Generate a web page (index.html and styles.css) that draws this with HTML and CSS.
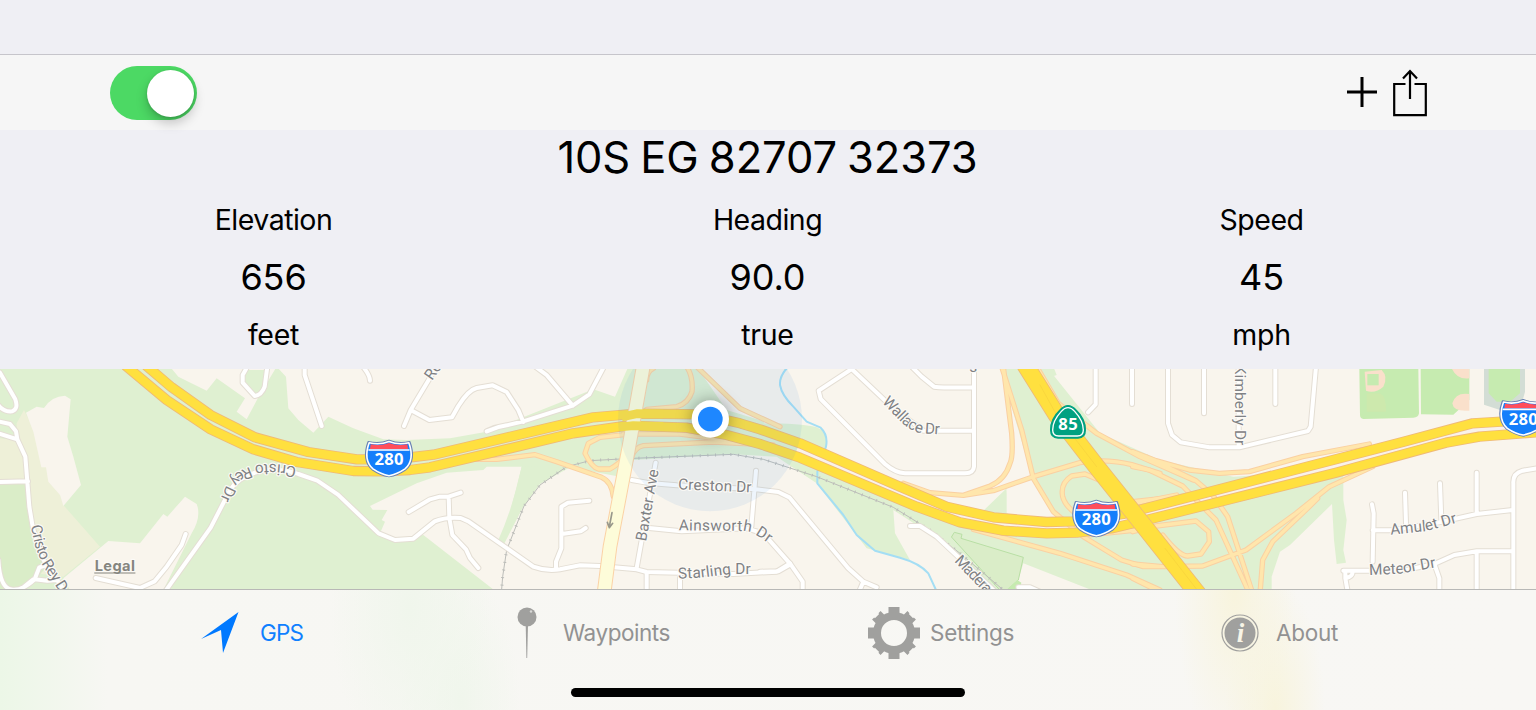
FILE: index.html
```html
<!DOCTYPE html>
<html lang="en">
<head>
<meta charset="utf-8">
<title>GPS</title>
<link rel="stylesheet" href="styles.css">
</head>
<body>
<div class="app">
  <div class="status"></div>
  <header class="toolbar">
    <div class="switch"><span class="knob"></span></div>
    <div class="actions">
      <svg class="plus" width="30" height="30" viewBox="0 0 30 30"><path d="M15 0V30M0 15H30"/></svg>
      <svg class="share" width="34" height="48" viewBox="0 0 34 48"><path d="M12.5 15H1.2V46.2H32.8V15H21.5"/><path d="M17 30V3M10 9.500L17 2L24 9.500"/></svg>
    </div>
  </header>
  <section class="readout">
    <h1 class="coords"><span>10S EG 82707 32373</span></h1>
    <div class="stats">
      <div class="stat"><span class="name elev">Elevation</span><span class="value">656</span><span class="unit">feet</span></div>
      <div class="stat"><span class="name">Heading</span><span class="value">90.0</span><span class="unit">true</span></div>
      <div class="stat"><span class="name">Speed</span><span class="value">45</span><span class="unit">mph</span></div>
    </div>
  </section>
  <svg class="map" viewBox="0 27 4608 663" preserveAspectRatio="none">
    <defs>
      <g id="streets">
        <path d="M0 38L46 118Q56 148 36 154Q10 156 -5 135M-5 184L30 192L48 214L52 238L76 290L88 440L98 500L120 580L142 620L200 700M-5 220L52 238M-5 366L84 364M-5 600Q0 690 40 689Q70 690 104 658L142 662L170 660M104 658L118 622L140 615M100 658L60 690"/>
        <path d="M287 654L420 684L464 664L500 620L545 555L557 522M495 695L632 503L690 390Q720 345 790 332Q850 325 895 342L952 362L1014 404L1136 520L1185 540L1240 536L1304 484Q1340 470 1382 474L1405 484L1600 620Q1640 635 1680 628L1740 616L1800 618L1910 628L1940 636L2200 642L2330 635L2370 610M742 20L728 45V68L764 108Q785 105 794 80L802 20M914 20V45L965 198M1085 15Q1110 45 1110 62"/>
        <g transform="translate(1140)">
          <path d="M72 198L92 150L170 20M92 150L148 180L216 172L235 138Q265 90 290 84L338 76L380 96L415 150L430 186M320 214Q350 200 380 196L430 184L578 137L628 103L672 20M466 20L500 45L578 137M86 456L150 418L180 410L206 410L242 398M206 410L208 474L217 525L258 568L270 594L295 624M528 625V605L544 565V440L564 428L628 422M546 522L602 514L617 504M755 360L800 368L890 376L1128 388L1195 396L1228 412L1405 625L1450 665L1490 682M1128 332L1114 500M827 308L770 624M800 503L905 514L1100 505L1150 520L1232 613L1268 665V700M800 640V700M900 640V700M1140 635L1195 634L1232 613M1450 665L1435 700"/>
        </g>
        <g transform="translate(2280)">
          <path d="M455 20L485 50L522 80Q560 84 642 82M642 20V320Q640 340 615 340H435Q405 338 375 312L182 117L176 92L275 27L400 145L490 212H642M450 498H480L530 530L610 605L700 690M1007 20V133L984 157M1116 20V132M775 682H810L850 700"/>
        </g>
        <g transform="translate(3408)">
          <path d="M96 20V190L108 225L134 247L220 262H310L516 213L524 200L540 20M204 20V160M418 20V132M308 20V262M708 433L713 460L710 605M710 511H770L920 485L1022 462L1130 450M807 398L810 490M912 370L916 480M1022 338V462M1202 325L1160 332Q1130 340 1132 370V700M622 632H800L895 612L955 585L1022 574H1130M1022 574V700M636 700L628 655Q650 650 650 636M628 632V655M895 612L910 655V700"/>
        </g>
      </g>
      <g id="ramps">
        <g transform="translate(1140)">
          <path d="M260 298L350 298L465 284L530 305L665 352Q695 365 700 410M740 223L660 232L625 250L615 280Q635 322 655 327H690Q720 310 735 290M740 350L755 290Q765 262 790 257L1000 246L1180 255M730 222L900 222L1040 240M800 148L890 140Q925 130 936 95Q940 50 920 20M800 60Q800 35 820 25M950 20L1080 145L1200 200"/>
        </g>
        <g transform="translate(2280)">
          <path d="M730 20L755 220Q760 290 750 310Q735 360 690 378L610 406L510 398L430 370M725 20L785 210L820 355L880 455L970 530L1085 600L1150 620H1200M610 406L700 392L820 350L960 308Q1040 295 1115 314L1200 340M960 470Q915 440 908 410Q900 370 935 348L975 342L1030 365L1080 425M830 20L895 130L1010 220L1140 290L1300 360M640 508L900 580L1100 645L1200 690M980 525L1130 510M1100 435L1250 405"/>
        </g>
        <g transform="translate(3408)">
          <path d="M-10 275L60 302L160 330L250 340L340 335L500 290L700 252M-10 320L40 330L140 378L185 425L240 480L340 700M30 290L180 362L230 405L275 470L350 700M-10 425L150 408M-10 515L60 498L180 483L218 515L220 545L195 582L155 588Q130 588 80 525M-10 612L80 620L200 618L330 570L480 460L580 380L710 320M545 415L520 440L410 545L380 600L372 700M-10 655L70 695"/>
        </g>
      </g>
      <g id="highway">
        <path d="M440 18L515 82L632 165L765 232L925 276L1070 298H1140L1240 291L1300 284L1780 172L1910 161L2100 163L2220 190L2280 208L2400 250L2700 380L2840 440L2980 472L3140 486L3220 484L3370 462L3638 393L4208 246L4418 190L4620 178"/>
        <path d="M378 18L500 120L632 208L760 268L890 306L1060 333L1150 334L1230 330L1290 322L1720 220L1880 197L2060 203L2180 225L2280 252L2400 293L2750 440L2880 487L3010 512L3140 520L3230 518L3340 504L3448 478L4008 338L4338 248L4438 230L4620 216"/>
      </g>
      <path id="avenue" d="M1930 18L1885 270L1830 560L1812 700"/>
      <path id="freeway" d="M3078 18L3170 165L3290 320L3408 468L3596 705"/>
      <path id="shield" d="M-62 -54Q-30 -46 0 -58Q30 -46 62 -54C76 -15 70 10 50 28Q25 45 0 49Q-25 45 -50 28C-70 10 -76 -15 -62 -54Z"/>
      <path id="p-cristo" d="M92 498L106 560L130 620L200 730"/>
      <path id="p-rey" d="M890 322Q840 309 790 313Q730 319 700 347Q680 367 652 440"/>
      <path id="p-wallace" d="M2645 127L2705 188Q2735 216 2768 220L2850 225"/>
      <path id="p-ains" d="M2036 511L2235 513Q2262 513 2330 570"/>
      <path id="p-star" d="M2035 656L2110 652L2200 641L2275 641"/>
      <path id="p-amulet" d="M4172 524L4280 513L4390 483"/>
      <path id="p-meteor" d="M4108 645L4200 641L4330 618"/>
    </defs>
    <rect class="land" y="20" width="4608" height="680"/>
    <path class="green" d="M0 20H510L535 50L620 92L650 55L735 115L710 155L740 178L775 112L830 20L858 50L865 145L895 180L940 218L985 170L1060 205L1150 238L1220 240L1350 235L1460 215L1780 88L1845 110L1885 20H2360L2315 130L2292 190Q2400 190 2450 202Q2485 215 2478 260L2470 310L2550 345L2900 500L3020 385V460L3160 490L3180 470L3100 365L3000 20H3140L3300 220L3480 300L3700 350L4030 330V420L4040 480L4030 570L4038 608L4010 612L4002 540L3996 432L3870 555L3840 575L3815 650V700H3300L3070 610L3045 690L2990 700L2850 560L2680 450L2685 520L2730 600L2600 565L2450 370L2330 290L2200 283L1900 300L1860 350L1700 320L1640 440L1560 560L1508 546L1565 320L1460 320L1450 330L1340 338L1250 370L1110 438L1118 449L1162 450L1145 480L1155 485L1140 520L1185 540L1270 525L1495 700H0Z"/>
    <path class="green" d="M735 30H800L790 95L764 105L730 65ZM3110 20H3160L3170 45L3155 50Z"/>
    <path class="land" d="M2472 312L2860 465L2770 410L2690 372L2480 270ZM3020 387L3090 365L3175 470L3100 490L3025 470ZM2355 20L2320 130L2295 185L2180 150L2090 20Z"/>
    <path class="land" d="M1510 545L1560 440L1572 438L1640 340L1700 325L1830 370V640H1640Z"/>
    <path class="green" d="M1565 320L1710 322L1620 372L1572 436L1512 552L1494 542Q1540 440 1565 320Z"/>
    <path class="olive" d="M72 150L150 310L190 435L300 560L190 650L110 640L80 400L50 240L50 190ZM0 235L50 240L82 360H0Z"/>
    <path class="park" d="M0 372H84L98 500L140 620L80 688H0Z"/>
    <path class="land" d="M78 158L110 140L132 144Q155 108 195 107L212 118L202 230L220 290L243 375L190 438L180 405L145 365L138 322L124 322L100 215ZM190 655L325 543L420 550L490 462L502 470L555 410L590 432Q605 470 575 520L490 690H210Z"/>
    <path class="park outlined" d="M2855 530L2863 517L2886 523L2883 535L3070 592L3055 660L3010 700Z"/>
    <path class="field" d="M3052 660L3064 668L3056 700H3008ZM4078 27H4255L4257 160Q4255 173 4240 173L4090 177Q4080 176 4080 165ZM4262 27H4408V120L4360 164L4263 163Z"/>
    <path class="trackbed" d="M4452 20H4575V95L4560 150H4500L4452 134Z"/>
    <path class="field" d="M4466 20H4560V100L4530 125H4490L4466 100Z"/>
    <g class="dirt"><path d="M4094 35L4145 30Q4165 50 4150 80Q4125 102 4098 92ZM4356 27H4408V55Q4372 60 4356 27ZM4408 102V152Q4360 156 4357 130Q4366 96 4408 102Z"/><path class="field" d="M4102 42H4136V76H4102Z"/><path class="infield" d="M4100 100H4140Q4160 110 4158 155H4100Z"/></g>
    <path class="stream" d="M2366 20Q2338 45 2340 75Q2345 105 2380 140L2420 185L2462 203Q2485 225 2478 260L2452 335V370L2530 465L2570 525L2625 572L2700 593Q2760 610 2785 640L2808 690"/>
    <path class="rail" d="M1504 700L1508 650L1520 570L1572 438L1620 375L1700 320L1770 302L1900 295L2200 283L2290 298L2450 350L2680 442L2790 510L2880 580L3010 690"/>
    <path class="rail ties" d="M1504 700L1508 650L1520 570L1572 438L1620 375L1700 320L1770 302L1900 295L2200 283L2290 298L2450 350L2680 442L2790 510L2880 580L3010 690"/>
    <use href="#streets" class="street-edge"/><use href="#streets" class="street"/>
    <path class="verge" d="M2400 272L2725 410L2860 463L2995 492L3140 503L3225 501L3370 480L3543 436L4108 292L4428 210L4608 197"/>
    <use href="#ramps" class="ramp-edge"/><use href="#ramps" class="ramp"/>
    <use href="#highway" class="hw-edge"/><use href="#highway" class="hw"/>
    <use href="#freeway" class="fw-edge"/><use href="#freeway" class="fw"/>
    <path class="median" d="M3120 75L3170 165L3290 320M3495 565L3590 688"/>
    <use href="#avenue" class="av-edge"/><use href="#avenue" class="av"/>
    <path class="hw" d="M1865 171L1910 161L1990 162M1860 201L1900 197L1990 200"/>
    <path class="arrow" d="M1836 458L1829 495M1822 487L1828 503L1838 490"/>
    <circle class="accuracy" cx="2130" cy="178" r="276"/>
    <g class="labels">
      <text transform="translate(1296 63) rotate(-55)">Re</text>
      <text><textPath href="#p-cristo" textLength="222">Cristo Rey D</textPath></text>
      <text><textPath href="#p-rey" textLength="280">Cristo Rey Dr</textPath></text>
      <text><textPath href="#p-wallace" textLength="208">Wallace Dr</textPath></text>
      <text transform="translate(2034 388) rotate(2.500)" textLength="220">Creston Dr</text>
      <text><textPath href="#p-ains" textLength="278">Ainsworth Dr</textPath></text>
      <text><textPath href="#p-star" textLength="218">Starling Dr</textPath></text>
      <text transform="translate(1938 545) rotate(-80)" textLength="218">Baxter Ave</text>
      <text transform="translate(2862 604) rotate(46)" textLength="138">Madera</text>
      <text transform="translate(3706 14) rotate(90)" textLength="242">Kimberly Dr</text>
      <text transform="translate(2908 36)">s</text>
      <text><textPath href="#p-amulet" textLength="204">Amulet Dr</textPath></text>
      <text><textPath href="#p-meteor" textLength="202">Meteor Dr</textPath></text>
      <text class="legal" x="284" y="634" textLength="121">Legal</text>
    </g>
    <path class="legal-line" d="M284 639H405"/>
    <g class="shields">
      <g transform="translate(1167 300)"><use href="#shield" class="rim"/><use href="#shield" class="blue"/><path class="red" d="M-57 -33L-55 -47Q-25 -41 0 -51Q25 -41 55 -47L57 -33Z"/><path class="rule" d="M-60 -30H60"/><text y="16" textLength="87">280</text></g>
      <g transform="translate(3289 480)"><use href="#shield" class="rim"/><use href="#shield" class="blue"/><path class="red" d="M-57 -33L-55 -47Q-25 -41 0 -51Q25 -41 55 -47L57 -33Z"/><path class="rule" d="M-60 -30H60"/><text y="16" textLength="87">280</text></g>
      <g transform="translate(4570 178)"><use href="#shield" class="rim"/><use href="#shield" class="blue"/><path class="red" d="M-57 -33L-55 -47Q-25 -41 0 -51Q25 -41 55 -47L57 -33Z"/><path class="rule" d="M-60 -30H60"/><text y="16" textLength="87">280</text></g>
      <g transform="translate(3204 188)"><path class="state" d="M0 -51Q12 -51 24 -38Q53 -10 52 22Q52 46 30 46H-30Q-52 46 -52 22Q-53 -10 -24 -38Q-12 -51 0 -51Z"/><path class="state-line" d="M0 -45Q10 -45 20 -34Q46 -6 46 22Q46 40 28 40H-28Q-46 40 -46 22Q-46 -6 -20 -34Q-10 -45 0 -45Z"/><text y="22" textLength="58">85</text></g>
    </g>
    <g class="me"><circle cx="2131" cy="177" r="56"/><circle class="dot" cx="2131" cy="177" r="37"/></g>
  </svg>
  <nav class="tabs">
    <a class="tab gps"><svg width="38" height="42" viewBox="0 0 38 42"><path d="M37.500 0L22 41L20 18L0 27Z"/></svg><span>GPS</span></a>
    <a class="tab waypoints"><svg width="20" height="52" viewBox="0 0 20 52"><circle cx="10" cy="10" r="9.500"/><path d="M8.700 18H11L10.200 51H9.400Z"/><circle class="glint" cx="14" cy="4.500" r="1.200"/></svg><span>Waypoints</span></a>
    <a class="tab settings"><svg width="52" height="52" viewBox="-26 -26 52 52"><path d="M-5.500 -26H5.500V-18H-5.500ZM-5.500 18H5.500V26H-5.500ZM-26 -5.500H-18V5.500H-26ZM18 -5.500H26V5.500H18Z"/><path transform="rotate(45)" d="M-6 -25H-3V-24H3V-25H6V-16H-6ZM-6 25H-3V24H3V25H6V16H-6ZM-25 -6V-3H-24V3H-25V6H-16V-6ZM25 -6V-3H24V3H25V6H16V-6Z"/><circle class="ring" r="17"/></svg><span>Settings</span></a>
    <a class="tab about"><svg width="38" height="38" viewBox="0 0 38 38"><circle class="rim" cx="19" cy="19" r="18"/><circle cx="19" cy="19" r="15.500"/><text x="19.500" y="28" text-anchor="middle">i</text></svg><span>About</span></a>
    <div class="home"></div>
  </nav>
</div>
</body>
</html>
```
FILE: styles.css
```css
* { box-sizing: border-box; }
body { margin: 0; background: #efeff4; }
.app { width: 1536px; height: 710px; overflow: hidden; display: flex; flex-direction: column; font-family: Inter, "Liberation Sans", sans-serif; color: #000; }
.status { height: 54px; flex: none; }
.toolbar { height: 76px; flex: none; border-top: 1px solid #c6c5cb; background: #f6f6f6; display: flex; justify-content: space-between; align-items: flex-start; padding: 11px 109px 0 110px; }
.switch { width: 87px; height: 54px; border-radius: 27px; background: #4cd964; display: flex; justify-content: flex-end; padding: 3.500px 3px; }
.knob { width: 47px; height: 47px; border-radius: 50%; background: #fff; box-shadow: 0 6px 12px rgba(0,0,0,.22), 0 1px 3px rgba(0,0,0,.15); }
.actions { display: flex; gap: 16px; padding-top: 2px; }
.actions svg { fill: none; stroke: #000; }
.plus { margin-top: 9px; stroke-width: 3; }
.share { stroke-width: 2.2; margin-top: .6px; }
.readout { height: 239px; flex: none; text-align: center; }
.coords { margin: 0; height: 55px; font-size: 43.500px; line-height: 55px; font-weight: 400; letter-spacing: -.1px; word-spacing: -2px; padding-right: 1px; }
.stats { display: grid; grid-template-columns: repeat(3, 494px); padding-left: 26.500px; }
.stat { display: flex; flex-direction: column; }
.name { height: 71px; line-height: 70px; font-size: 28.500px; letter-spacing: -.5px; }
.value { height: 43px; line-height: 42px; font-size: 36px; letter-spacing: -.1px; }
.unit { height: 70px; line-height: 72px; font-size: 28.500px; letter-spacing: -.3px; }
.map { width: 1536px; height: 221px; flex: none; display: block; fill: none; stroke-linejoin: round; stroke-linecap: round; }
.land { fill: #f9f5ed; }
.green { fill: #dff0d1; }
.olive { fill: #eef0d8; }
.park { fill: #daedc8; }
.outlined { stroke: #b9dfa5; stroke-width: 3; }
.field { fill: #c6ebb0; }
.trackbed { fill: #d3ddd5; }
.dirt { fill: #fae0cb; }
.infield { fill: #cde9ad; }
.stream { stroke: #a4def4; stroke-width: 6; }
.rail { stroke: #bcbdb9; stroke-width: 3; }
.ties { stroke-width: 9; stroke-dasharray: 3 20; stroke-linecap: butt; }
.street-edge { stroke: #e4ded4; stroke-width: 18; }
.street { stroke: #fff; stroke-width: 12; }
.verge { stroke: #f9f2ea; stroke-width: 20; }
.ramp-edge { stroke: #fad0a2; stroke-width: 16; }
.ramp { stroke: #ffe6ac; stroke-width: 10; }
.hw-edge { stroke: #efb977; stroke-width: 31; }
.hw { stroke: #ffe03f; stroke-width: 26; stroke-linecap: butt; }
.fw-edge { stroke: #efb977; stroke-width: 54; }
.fw { stroke: #ffe03f; stroke-width: 49; }
.median { stroke: #f6d23d; stroke-width: 2; }
.av-edge { stroke: #fbd2a5; stroke-width: 44; }
.av { stroke: #fdfcd9; stroke-width: 38; }
.arrow { stroke: #98988b; stroke-width: 5; }
.accuracy { fill: rgba(65,145,225,.09); }
.labels { font: 400 46px Roboto, sans-serif; fill: #7f8184; stroke: #fcfaf6; stroke-width: 7; paint-order: stroke; }
.legal { font: 700 44px Inter, sans-serif; fill: #85857f; }
.legal-line { stroke: #85857f; stroke-width: 3; }
.shields { font: 700 50px "Noto Sans", sans-serif; text-anchor: middle; fill: #fff; }
.shields .rim { fill: #6a83b4; stroke: #6a83b4; stroke-width: 6; }
.shields .blue { fill: #147efb; stroke: #fff; stroke-width: 5; transform: scale(.96); }
.shields .red { fill: #ff4e5c; }
.shields .rule { stroke: #fff; stroke-width: 5; }
.state { fill: #00a181; stroke: #00a181; stroke-width: 4; }
.state-line { fill: none; stroke: #fff; stroke-width: 4; }
.me { fill: #fff; filter: drop-shadow(0 0 24px rgba(0,0,0,.35)); }
.me .dot { fill: #1e87ff; }
.tabs { position: relative; height: 121px; flex: none; margin-top: -1px; border-top: 1px solid #b8b8b6; background: radial-gradient(ellipse 60px 170px at 1235px 0px, #f8f4dd, rgba(248,244,221,0)), radial-gradient(ellipse 50px 130px at 1275px 120px, #f8f4dd, rgba(248,244,221,0)), radial-gradient(ellipse 80px 160px at 410px 20px, #f0f6ec, rgba(240,246,236,0)), radial-gradient(ellipse 60px 130px at 460px 110px, #f0f6ec, rgba(240,246,236,0)), linear-gradient(90deg, #ecf7e7, #f7f7f3 7%, #f8f7f4 100%); display: flex; align-items: flex-start; }
.tab { height: 86px; display: flex; align-items: center; color: #929292; fill: #a0a09e; font-size: 22.500px; letter-spacing: -.25px; }
.tab span { padding-bottom: 2px; }
.gps { width: 316px; margin-left: 201px; gap: 21px; color: #0f80ff; fill: #0079ff; letter-spacing: -.8px; }
.waypoints { width: 351px; gap: 26px; letter-spacing: -.45px; }
.settings { width: 353px; gap: 10px; }
.about { width: 160px; gap: 17px; }
.glint { fill: #d8d8d6; }
.ring { fill: none; stroke: #a0a09e; stroke-width: 8; }
.tab .rim { fill: none; stroke: #a0a09e; stroke-width: 1.200; }
.tab text { font: italic 700 27px "Liberation Serif", serif; fill: #f8f5e7; }
.home { position: absolute; left: 571px; bottom: 13px; width: 394px; height: 9px; border-radius: 5px; background: #000; }
```
